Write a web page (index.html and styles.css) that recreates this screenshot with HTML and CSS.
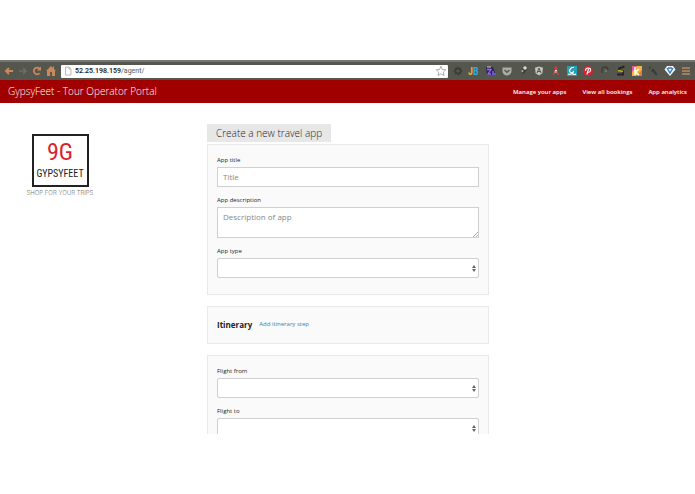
FILE: index.html
```
<!DOCTYPE html>
<html lang="en">
<head>
    <meta charset="UTF-8">
    <meta name="viewport" content="width=device-width, initial-scale=1.0">
    <title>GypsyFeet - Tour Operator Portal</title>
    <link rel="stylesheet" href="styles.css">
</head>
<body>
    <div class="browser">
        <div class="toolbar">
            <button type="button" class="tool" aria-label="Back">
                <svg viewBox="0 0 12 12"><path d="M10 6H3M6 3L3 6l3 3" fill="none" stroke="#c98a58" stroke-width="2"/></svg>
            </button>
            <button type="button" class="tool" aria-label="Forward">
                <svg viewBox="0 0 12 12"><path d="M2 6h7M6 3l3 3-3 3" fill="none" stroke="#6f6e63" stroke-width="1.5"/></svg>
            </button>
            <button type="button" class="tool" aria-label="Reload">
                <svg viewBox="0 0 12 12"><path d="M8.6 8.200A3.300 3.300 0 1 1 8.500 3.700" fill="none" stroke="#c98a58" stroke-width="1.700"/><path d="M10 1.500v4H6z" fill="#c98a58"/></svg>
            </button>
            <button type="button" class="tool" aria-label="Home">
                <svg viewBox="0 0 12 12"><path d="M6 1L1 6h1v5h3V7h2v4h3V6h1L9 4V1.500H8V3z" fill="#c98a58"/></svg>
            </button>
            <div class="address">
                <svg class="page-icon" viewBox="0 0 8 10"><path d="M1.500 1h3.500l2 2v6h-5.500zM5 1v2h2" fill="#fff" stroke="#aaa" stroke-width=".8"/></svg>
                <span class="url">52.25.198.159<span class="path">/agent/</span></span>
                <svg class="star" viewBox="0 0 12 12"><path d="M6 1.300l1.400 3.100 3.400.4-2.500 2.300.7 3.400-3-1.700-3 1.700.7-3.400L1.200 4.800l3.400-.4z" fill="#fff" stroke="#999" stroke-width=".8"/></svg>
            </div>
            <div class="extensions">
                <svg viewBox="0 0 12 12"><circle cx="6" cy="6" r="2.600" fill="none" stroke="#3b3c36" stroke-width="1.600"/><path d="M6 1.500v1.500M6 9v1.500M1.500 6H3M9 6h1.500M3 3l1 1M8 8l1 1M9 3L8 4M4 8L3 9" stroke="#3b3c36" stroke-width="1.200"/></svg>
                <svg viewBox="0 0 12 12"><text x="0" y="10" class="jb"><tspan fill="#f0a92c">J</tspan><tspan fill="#36a9d6">B</tspan></text></svg>
                <svg viewBox="0 0 12 12"><path d="M1 2h7l3 8H2z" fill="#282368"/><path d="M2 4.500h4L3 9h3" fill="none" stroke="#a46ad2" stroke-width="1.300"/><path d="M7 6h2v2h2v2H7z" fill="#6a58bd"/><path d="M2 2h4" stroke="#d9ced9"/></svg>
                <svg viewBox="0 0 12 12"><path d="M1.500 2.500h9V6a4.500 4.500 0 0 1-9 0z" fill="#adada7"/><path d="M3.500 5L6 7.200 8.500 5" fill="none" stroke="#54554d" stroke-width="1.400"/></svg>
                <svg viewBox="0 0 12 12"><path d="M5 10L6.500 6 5 5l3-3 2 2-2 3" fill="#353630"/><circle cx="8" cy="3" r="1.700" fill="#ddd"/><circle cx="5.500" cy="6" r="1" fill="#b5b5b0"/></svg>
                <svg viewBox="0 0 12 12"><path d="M6 1.500l4 1.300-.6 5.500L6 10.500 2.600 8.300 2 2.800z" fill="#c5c5c0"/><path d="M4 8l2-5 2 5M4.900 6.500h2.200" fill="none" stroke="#54554d"/></svg>
                <svg viewBox="0 0 12 12"><circle cx="6" cy="3" r="1.800" fill="#d2392f"/><path d="M5 4h2l2 6H7.500L6 7l-2 3H3z" fill="#cf473c"/><path d="M5 5.500h2M4.500 7h2" stroke="#eee"/></svg>
                <svg viewBox="0 0 12 12"><path d="M1 1h10v10H1z" fill="#279fb4"/><path d="M8 2.500C5 2 2.500 5 4 7c1.500 2 4.500 0 3-1M2 9c2 1 4-1 5 0s3 0 3 0" fill="none" stroke="#fff" stroke-width="1.200"/></svg>
                <svg viewBox="0 0 12 12"><circle cx="6" cy="6" r="5" fill="#cf2632"/><path d="M3.800 6C2.500 2 9.500 2 8.500 5.500 8 8 5.500 7.500 5.500 6.500M6.500 4L4.800 9.500" fill="none" stroke="#fff" stroke-width="1.100"/></svg>
                <svg viewBox="0 0 12 12"><path d="M3 8V5a3 3 0 0 1 6 0" fill="none" stroke="#3d3e37" stroke-width="1.400"/><circle cx="7" cy="6" r="1.200" fill="#74756b"/></svg>
                <svg viewBox="0 0 12 12"><path d="M9.500 1.500L4 3.500v2l4 .5v3.500H2" fill="none" stroke="#25261f" stroke-width="1.900"/><path d="M3 5.500l5 1" stroke="#c7ae2e" stroke-width="1.700"/></svg>
                <svg viewBox="0 0 12 12"><path d="M1 1h10v10H1z" fill="#f1b53a"/><path d="M1 1h5L1 7z" fill="#e85a91"/><path d="M11 5v6H5z" fill="#e9773d"/><path d="M4 2v8M8 4L4.500 7 8 10" fill="none" stroke="#fff" stroke-width="1.500"/></svg>
                <svg viewBox="0 0 12 12"><path d="M3 3l3 3M6 5l3 4" stroke="#3b3c36" stroke-width="2.200" stroke-linecap="round"/><circle cx="4" cy="4" r=".8" fill="#77786e"/></svg>
                <svg viewBox="0 0 12 12"><path d="M3 1h6l2.500 3.500L6 11 .5 4.500z" fill="#f2f6fa"/><path d="M3 3l3 5 3-5M4 3h4" fill="none" stroke="#3478b4" stroke-width="1.400"/></svg>
                <svg viewBox="0 0 12 12"><path d="M2 3h8M2 6h8M2 9h8" stroke="#b98b64" stroke-width="1.400"/></svg>
            </div>
        </div>

        <header class="top-bar">
            <h1>GypsyFeet - Tour Operator Portal</h1>
            <nav>
                <a href="#">Manage your apps</a>
                <a href="#">View all bookings</a>
                <a href="#">App analytics</a>
            </nav>
        </header>

        <main class="content">
            <aside>
                <div class="brand">
                    <div class="logo">
                        <span class="mark">9G</span>
                        <span class="name">GYPSYFEET</span>
                    </div>
                    <p class="tagline">SHOP FOR YOUR TRIPS</p>
                </div>
            </aside>

            <form class="app-form">
                <h2>Create a new travel app</h2>
                <section class="panel">
                    <div class="field">
                        <label for="title">App title</label>
                        <input type="text" id="title" placeholder="Title">
                    </div>
                    <div class="field">
                        <label for="description">App description</label>
                        <div class="textarea">
                            <textarea id="description" placeholder="Description of app"></textarea>
                            <svg class="grip" viewBox="0 0 6 6"><path d="M1 6l5-5M4 6l2-2" stroke="#999" stroke-width=".8"/></svg>
                        </div>
                    </div>
                    <div class="field">
                        <label for="type">App type</label>
                        <div class="select">
                            <select id="type"><option value=""></option></select>
                        </div>
                    </div>
                </section>

                <section class="panel itinerary">
                    <h3>Itinerary</h3>
                    <a href="#">Add itinerary step</a>
                </section>

                <section class="panel">
                    <div class="field">
                        <label for="from">Flight from</label>
                        <div class="select">
                            <select id="from"><option value=""></option></select>
                        </div>
                    </div>
                    <div class="field">
                        <label for="to">Flight to</label>
                        <div class="select">
                            <select id="to"><option value=""></option></select>
                        </div>
                    </div>
                </section>
            </form>
        </main>
    </div>
</body>
</html>
```
FILE: styles.css
```
* {
    box-sizing: border-box;
}
body {
    margin: 0;
    height: 100vh;
    padding: 60px 0;
    background-color: #fff;
    color: #222;
    font-family: "Open Sans", sans-serif;
    font-size: 6px;
}
h1, h2, h3, p {
    margin: 0;
}
a {
    text-decoration: none;
}
.browser {
    height: 100%;
    overflow: hidden;
}

/* browser toolbar */
.toolbar {
    display: flex;
    align-items: center;
    height: 20px;
    padding: 0 3px;
    background-color: #55564e;
    border-top: 2px solid #77776f;
}
.tool {
    display: flex;
    width: 12px;
    height: 12px;
    margin-right: 2px;
    padding: 0;
    background: none;
    border: none;
}
.toolbar svg {
    display: block;
    flex: none;
    width: 12px;
    height: 12px;
}
.address {
    display: flex;
    flex: 1;
    align-items: center;
    height: 13px;
    margin: 0 4px 0 2px;
    padding: 0 1px 0 3px;
    background-color: #fff;
    border-radius: 1px;
}
.toolbar .page-icon {
    width: 8px;
    height: 10px;
}
.url {
    flex: 1;
    margin-left: 3px;
    color: #222;
    font-family: Roboto, Arial, sans-serif;
    font-size: 7px;
    font-weight: 600;
    line-height: 12px;
}
.path {
    color: #555;
    font-weight: 400;
}
.extensions {
    display: flex;
    flex: none;
    justify-content: space-between;
    width: 240px;
}
.jb {
    font: bold 10px "Roboto Condensed", "Liberation Sans", sans-serif;
}

/* header */
.top-bar {
    display: flex;
    align-items: center;
    justify-content: space-between;
    height: 23px;
    padding: 0 8px;
    background-color: #a00000;
    color: #fff;
}
.top-bar h1 {
    font-size: 10px;
    font-weight: 300;
    line-height: 23px;
}
nav {
    display: flex;
    gap: 16px;
}
nav a {
    color: #fff;
    font-weight: 600;
}

/* page */
.content {
    display: grid;
    grid-template-columns: 207fr 282fr 206fr;
    padding-top: 21px;
}
.brand {
    display: flex;
    flex-direction: column;
    align-items: center;
    width: 120px;
    padding-top: 10px;
}
.logo {
    display: flex;
    flex-direction: column;
    align-items: center;
    justify-content: center;
    width: 57px;
    height: 53px;
    border: 2px solid #222;
    color: #222;
    font-family: "Roboto Condensed", "Liberation Sans Narrow", Roboto, sans-serif;
}
.mark {
    color: #dc1f2e;
    font-size: 24px;
    line-height: 26px;
}
.name {
    font-size: 10px;
    line-height: 18px;
}
.tagline {
    margin-top: 1px;
    color: #777;
    font-family: Inter, sans-serif;
    font-weight: 300;
    line-height: 10px;
    white-space: nowrap;
}
.app-form h2 {
    width: fit-content;
    margin-bottom: 2px;
    padding: 0 9px;
    background-color: #e7e7e7;
    color: #222;
    font-size: 10px;
    font-weight: 300;
    line-height: 18px;
}
.panel {
    margin-bottom: 11px;
    padding: 8px 9px 10px;
    background-color: #fafafa;
    border: 1px solid #e9e9e9;
}
.field {
    margin-bottom: 6px;
}
label {
    display: block;
    line-height: 14px;
}
input, textarea, select {
    display: block;
    width: 100%;
    height: 20px;
    margin: 0;
    padding: 0 5px 2px;
    background-color: #fff;
    border: 1px solid #d0d0d0;
    border-radius: 0;
    color: #333;
    font-family: inherit;
    font-size: 8px;
}
textarea {
    height: 31px;
    padding-top: 3px;
    resize: none;
}
::placeholder {
    color: #888;
}
.textarea, .select {
    position: relative;
}
.grip {
    position: absolute;
    right: 1px;
    bottom: 1px;
    width: 6px;
    height: 6px;
}
select {
    appearance: none;
    border-radius: 2px;
}
.select::before, .select::after {
    content: "";
    position: absolute;
    right: 3px;
    border: 2px solid transparent;
    pointer-events: none;
}
.select::before {
    top: 7px;
    border-top-width: 0;
    border-bottom: 3px solid #666;
}
.select::after {
    bottom: 6px;
    border-bottom-width: 0;
    border-top: 3px solid #666;
}
.itinerary {
    display: flex;
    align-items: center;
    gap: 7px;
    height: 38px;
    padding: 0 9px 2px;
}
.itinerary h3 {
    color: #222;
    font-size: 8px;
}
.itinerary a {
    color: #2a86b0;
}
```
